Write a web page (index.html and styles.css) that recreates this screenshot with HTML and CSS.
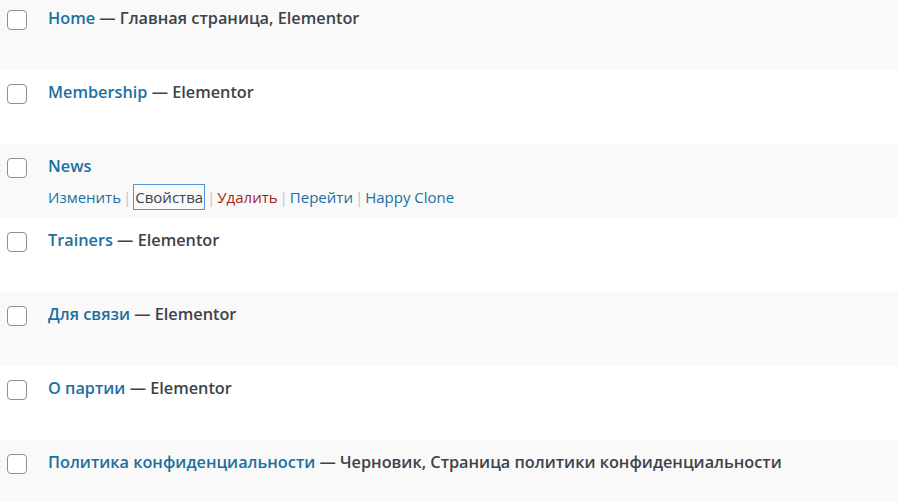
FILE: index.html
```html
<!doctype html>
<html>
<head>
<meta charset="utf-8">
<link rel="stylesheet" href="styles.css">
<title>Страницы</title>
</head>
<body>
<div class="pages">
  <div class="row alt">
    <div class="check"><span class="box"></span></div>
    <div class="title"><a href="#">Home</a> — Главная страница, Elementor</div>
  </div>
  <div class="row">
    <div class="check"><span class="box"></span></div>
    <div class="title"><a href="#">Membership</a> — Elementor</div>
  </div>
  <div class="row alt">
    <div class="check"><span class="box"></span></div>
    <div class="title">
      <a href="#">News</a>
      <div class="actions">
        <a href="#">Изменить</a><span class="sep">|</span><a href="#" class="focus">Свойства</a><span class="sep">|</span><a href="#" class="delete">Удалить</a><span class="sep">|</span><a href="#">Перейти</a><span class="sep">|</span><a href="#">Happy Clone</a>
      </div>
    </div>
  </div>
  <div class="row">
    <div class="check"><span class="box"></span></div>
    <div class="title"><a href="#">Trainers</a> — Elementor</div>
  </div>
  <div class="row alt">
    <div class="check"><span class="box"></span></div>
    <div class="title"><a href="#">Для связи</a> — Elementor</div>
  </div>
  <div class="row">
    <div class="check"><span class="box"></span></div>
    <div class="title"><a href="#">О партии</a> — Elementor</div>
  </div>
  <div class="row alt">
    <div class="check"><span class="box"></span></div>
    <div class="title"><a href="#">Политика конфиденциальности</a> — Черновик, Страница политики конфиденциальности</div>
  </div>
</div>
</body>
</html>
```

FILE: styles.css
```css
body {
    margin: 0;
    background-color: white;
    font-family: "Open Sans", "Noto Sans", sans-serif;
    color: #3c434a;
    overflow: hidden;
}
a {
    color: #1d6fa0;
    text-decoration: none;
}
.pages {
    margin-top: -4px;
}
.row {
    display: flex;
    height: 74px;
    background-color: white;
}
.row.alt {
    background-color: #f9f9f9;
}
.check {
    width: 48px;
    padding: 14px 0 0 7px;
    box-sizing: border-box;
}
.box {
    display: block;
    width: 18px;
    height: 18px;
    border: 1px solid #8c8f94;
    border-radius: 4px;
    background-color: white;
}
.title {
    padding-top: 10px;
    font-size: 16.3px;
    line-height: 24px;
    font-weight: 600;
}
.actions {
    margin-top: 7px;
    font-size: 15px;
    font-weight: 400;
    line-height: 24px;
}
.actions .sep {
    color: #c3c4c7;
    padding: 0 2px;
}
.actions .focus {
    color: #3c434a;
    border: 1px solid #4f94d4;
    padding: 2px 1px;
}
.actions .delete {
    color: #a61f20;
}
```
